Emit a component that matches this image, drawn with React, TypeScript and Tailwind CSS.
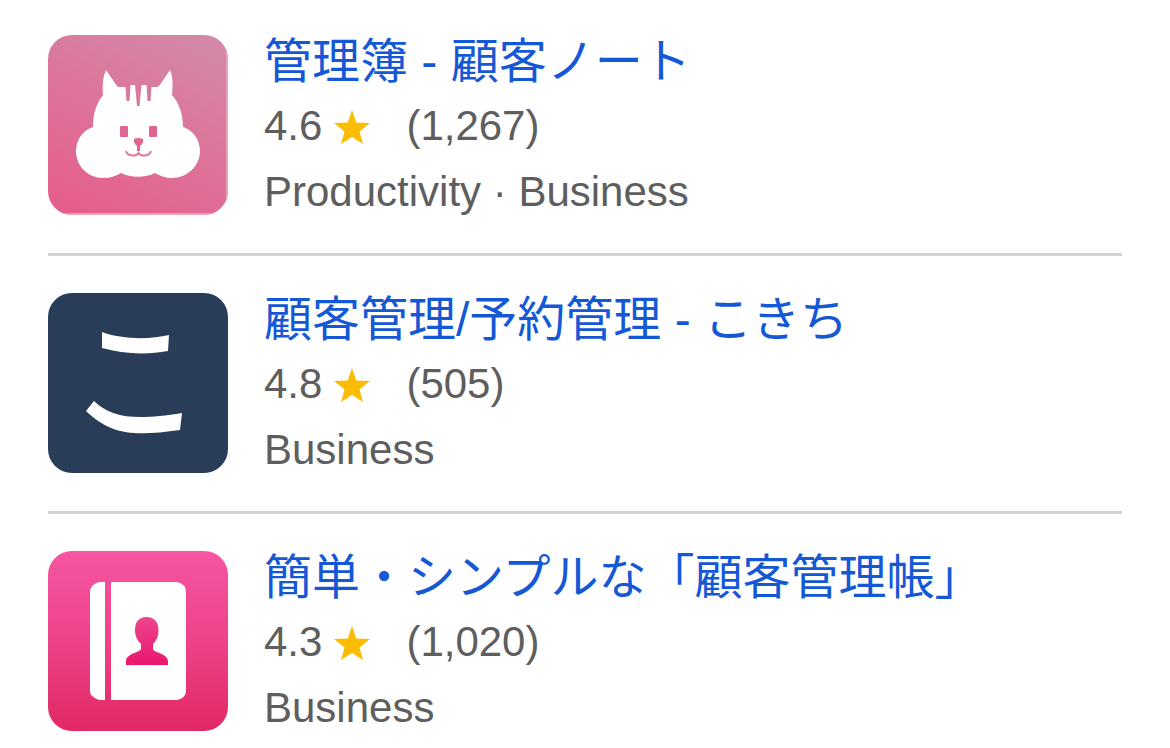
import type { ReactNode } from "react";

type AppItem = {
  name: string;
  rating: string;
  reviews: string;
  categories: string[];
  icon: ReactNode;
};

function CatIcon() {
  return (
    <svg viewBox="0 0 180 180" className="w-full h-full" aria-hidden="true">
      <defs>
        <linearGradient id="cat-bg" x1="0.25" y1="1" x2="0.75" y2="0">
          <stop offset="0" stopColor="#e55f8e" />
          <stop offset="1" stopColor="#d487a7" />
        </linearGradient>
      </defs>
      <rect width="180" height="180" fill="url(#cat-bg)" />
      <path d="M179 0V179H0" fill="none" stroke="#e9a3bd" strokeWidth="2" />
      {/* head with ears and forehead stripes */}
      <path
        fill="#fff"
        d="M58 35C61 39 65 46 70 52H77.500L78.500 66H81.500L82.500 50H87L89 71H91.500L93.500 50H98.500L99.500 66H102.500L103.500 52H110C115 46 119 39 122 35C125 41 125 51 124 60C131 68 135 79 135 92C145 95 152 105 152 116C152 131 139 143 124 143C118 143 112 141 107 138C97 143 83 143 73 138C68 141 62 143 55 143C40 143 28 131 28 116C28 105 35 95 45 92C45 79 48 69 55 60C54 51 55 41 58 35Z"
      />
      <g fill="#df6693">
        <rect x="72" y="91" width="8" height="11" rx="1" />
        <rect x="101" y="91" width="8" height="11" rx="1" />
        <path d="M86 104Q90 102 95 104Q96 108 92 111V116H89V111Q85 108 86 104Z" />
      </g>
      <path
        d="M78 116Q79 120 84 120.500Q89 121 90.500 118Q92 121 97 120.500Q102 120 103 116"
        fill="none"
        stroke="#df7ba0"
        strokeWidth="2"
      />
    </svg>
  );
}

function KokichiIcon() {
  return (
    <svg viewBox="0 0 180 180" className="w-full h-full" aria-hidden="true">
      <rect width="180" height="180" fill="#2a3d58" />
      <g fill="#fff">
        <path d="M54 39C72 46 101 47 121 42L120 58C98 62 75 61 54 55Z" />
        <path d="M46 108C64 126 90 127 134 120L132 137C88 143 64 143 38 118Z" />
      </g>
    </svg>
  );
}

function AddressBookIcon() {
  return (
    <svg viewBox="0 0 180 180" className="w-full h-full" aria-hidden="true">
      <defs>
        <linearGradient id="book-bg" x1="0" y1="0" x2="0" y2="1">
          <stop offset="0" stopColor="#f655a2" />
          <stop offset="0.5" stopColor="#ed438a" />
          <stop offset="1" stopColor="#e22864" />
        </linearGradient>
        <linearGradient id="person-fill" x1="0" y1="0" x2="0" y2="1">
          <stop offset="0" stopColor="#ef458e" />
          <stop offset="1" stopColor="#e8186f" />
        </linearGradient>
      </defs>
      <rect width="180" height="180" fill="url(#book-bg)" />
      <path d="M57 31H51Q42 34 42 41V140Q42 146 51 149H57Z" fill="#fff" />
      <path d="M63 31H129Q138 33 138 41V140Q138 147 129 149H63Z" fill="#fff" />
      <path
        fill="url(#person-fill)"
        d="M98.500 66C106 66 110.500 71 110.500 79C110.500 86 108 90 105 93V98C106 102 119 102 120 110V114H78V110C79 102 91 102 93 98V93C90 90 87 86 87 79C87 71 91 66 98.500 66Z"
      />
    </svg>
  );
}

function Star() {
  return (
    <svg viewBox="0 0 36 34" className="w-9 h-[34px]" aria-hidden="true">
      <path
        fill="#fbbc04"
        d="M18 0L22.200 12.500L36 13L25.500 21.500L29 34L18 27L7 34L10.500 21.500L0 13L13.800 12.500Z"
      />
    </svg>
  );
}

const apps: AppItem[] = [
  {
    name: "管理簿 - 顧客ノート",
    rating: "4.6",
    reviews: "(1,267)",
    categories: ["Productivity", "Business"],
    icon: <CatIcon />,
  },
  {
    name: "顧客管理/予約管理 - こきち",
    rating: "4.8",
    reviews: "(505)",
    categories: ["Business"],
    icon: <KokichiIcon />,
  },
  {
    name: "簡単・シンプルな「顧客管理帳」",
    rating: "4.3",
    reviews: "(1,020)",
    categories: ["Business"],
    icon: <AddressBookIcon />,
  },
];

function AppRow({ app }: { app: AppItem }) {
  return (
    <li className="flex items-start gap-9 pt-[37px] pb-7 first:pt-[35px] last:pb-0 border-b-[3px] border-[#d2d2d2] last:border-b-0">
      <div className="w-[180px] h-[180px] shrink-0 rounded-3xl overflow-hidden">
        {app.icon}
      </div>
      <div className="flex-1 min-w-0 text-[42px] leading-[66px] text-[#5e5e5e]">
        <h3 className="text-[48px] leading-[54px] mb-1 text-[#1558d6]">
          <a href="#">{app.name}</a>
        </h3>
        <div className="flex items-center">
          <span>{app.rating}</span>
          <span className="ml-3 mr-9 pt-0.5">
            <Star />
          </span>
          <span>{app.reviews}</span>
        </div>
        <p>{app.categories.join(" · ")}</p>
      </div>
    </li>
  );
}

export default function App() {
  return (
    <main className="bg-white font-['Liberation_Sans','Noto_Sans_CJK_JP',sans-serif]">
      <ul className="px-12">
        {apps.map((app) => (
          <AppRow key={app.name} app={app} />
        ))}
      </ul>
    </main>
  );
}
